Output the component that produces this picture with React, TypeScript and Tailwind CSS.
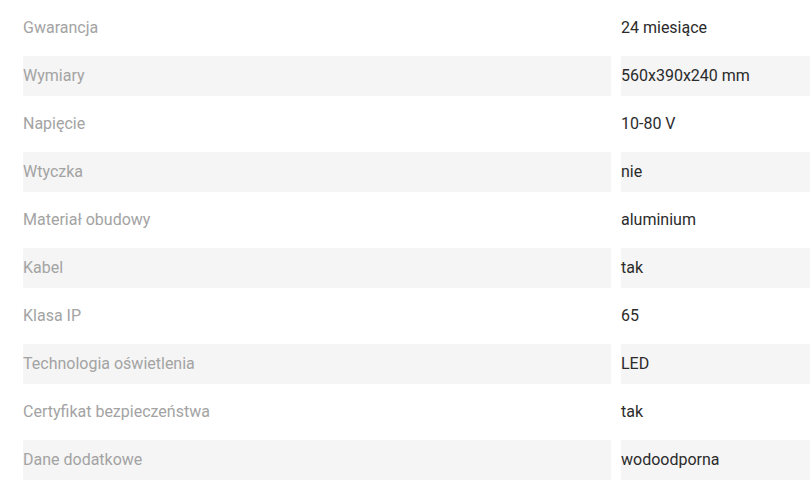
const rows: [string, string][] = [
  ["Gwarancja", "24 miesiące"],
  ["Wymiary", "560x390x240 mm"],
  ["Napięcie", "10-80 V"],
  ["Wtyczka", "nie"],
  ["Materiał obudowy", "aluminium"],
  ["Kabel", "tak"],
  ["Klasa IP", "65"],
  ["Technologia oświetlenia", "LED"],
  ["Certyfikat bezpieczeństwa", "tak"],
  ["Dane dodatkowe", "wodoodporna"],
];

export default function App() {
  return (
    <div className="h-[489px] w-[810px] overflow-hidden bg-white pl-[23px] pt-2 font-['Roboto',sans-serif] text-base">
      <div className="grid grid-cols-[588px_1fr] gap-x-[10px] gap-y-2">
        {rows.map(([label, value], i) => {
          const band = i % 2 === 1 ? "bg-[#f5f5f5]" : "bg-white";
          return (
            <div key={label} className="contents">
              <div className={`flex h-10 items-center text-[#a3a3a3] ${band}`}>{label}</div>
              <div className={`flex h-10 items-center text-[#2b2b2b] ${band}`}>{value}</div>
            </div>
          );
        })}
      </div>
    </div>
  );
}
